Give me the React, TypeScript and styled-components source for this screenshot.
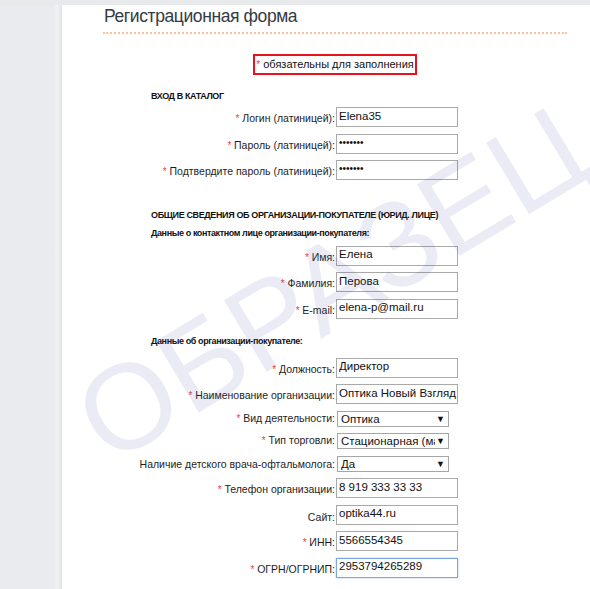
import styled, { createGlobalStyle, css } from "styled-components";

type Field = {
    label: string;
    required?: boolean;
    kind?: "text" | "password" | "select";
    value: string;
    focused?: boolean;
};

const loginFields: Field[] = [
    { label: "Логин (латиницей):", required: true, value: "Elena35" },
    { label: "Пароль (латиницей):", required: true, kind: "password", value: "1234567" },
    { label: "Подтвердите пароль (латиницей):", required: true, kind: "password", value: "1234567" },
];

const contactFields: Field[] = [
    { label: "Имя:", required: true, value: "Елена" },
    { label: "Фамилия:", required: true, value: "Перова" },
    { label: "E-mail:", required: true, value: "elena-p@mail.ru" },
];

const orgFields: Field[] = [
    { label: "Должность:", required: true, value: "Директор" },
    { label: "Наименование организации:", required: true, value: "Оптика Новый Взгляд" },
    { label: "Вид деятельности:", required: true, kind: "select", value: "Оптика" },
    { label: "Тип торговли:", required: true, kind: "select", value: "Стационарная (магазин)" },
    { label: "Наличие детского врача-офтальмолога:", kind: "select", value: "Да" },
    { label: "Телефон организации:", required: true, value: "8 919 333 33 33" },
    { label: "Сайт:", value: "optika44.ru" },
    { label: "ИНН:", required: true, value: "5566554345" },
    { label: "ОГРН/ОГРНИП:", required: true, value: "2953794265289", focused: true },
];

const GlobalStyle = createGlobalStyle`
    html, body {
        margin: 0;
        padding: 0;
        background: #fff;
    }
    body {
        font-family: "Liberation Sans", Arial, sans-serif;
        color: #1e1e1e;
    }
`;

const Page = styled.div`
    position: relative;
    display: flex;
    height: 589px;
    box-sizing: border-box;
    border-top: 5px solid #e8e9ea;
    overflow: hidden;
`;

const Sidebar = styled.aside`
    width: 62px;
    flex-shrink: 0;
    background: linear-gradient(
        to right,
        #e9ebee 0,
        #e9ebee 54px,
        #f2f3f5 57px,
        #e5e7ea 61px,
        #dcdee1 62px
    );
`;

const Main = styled.main`
    flex: 1;
    padding-left: 41px;
`;

const Content = styled.div`
    width: 464px;
`;

const Title = styled.h1`
    margin: 0;
    padding: 0 0 5px 1px;
    font-size: 17.5px;
    line-height: 22px;
    font-weight: normal;
    letter-spacing: -0.4px;
    color: #333a44;
    border-bottom: 2px dotted #fbc29a;
`;

const Notice = styled.div`
    width: fit-content;
    margin: 20px auto 0;
    padding: 0 1px;
    border: 2px solid #e8121c;
    font-size: 11px;
    line-height: 16px;
    color: #111;
`;

const Star = styled.span`
    color: #f03a46;
    font-size: 10px;
`;

const SectionTitle = styled.div<{ $spacing: number; $top: number }>`
    margin-top: ${props => props.$top}px;
    padding-left: 48px;
    font-size: 9px;
    line-height: 11px;
    font-weight: bold;
    letter-spacing: ${props => props.$spacing}px;
    color: #111;
`;

const Fields = styled.div<{ $top: number }>`
    display: grid;
    grid-template-columns: 232px auto;
    column-gap: 1px;
    row-gap: 6.5px;
    align-items: end;
    justify-items: start;
    margin-top: ${props => props.$top}px;
`;

const Label = styled.label`
    justify-self: end;
    font-size: 10.5px;
    line-height: 14px;
    padding-bottom: 1px;
    white-space: nowrap;
    color: #1e1e1e;
`;

const TextInput = styled.input<{ $focused?: boolean; $secret?: boolean }>`
    box-sizing: border-box;
    width: 122px;
    height: 20px;
    margin: 0;
    padding: 0 0 3px 2px;
    border: 1px solid #a9a9a9;
    background: #fff;
    font-family: inherit;
    font-size: ${props => (props.$secret ? "10px" : "11.5px")};
    color: #111;
    outline: none;

    ${props =>
        props.$focused &&
        css`
            border-color: #7ba6e4;
            box-shadow: 0 0 2px #a8c6f0;
        `}
`;

const SelectBox = styled.div`
    box-sizing: border-box;
    width: 112px;
    height: 16px;
    margin-left: 1px;
    display: flex;
    align-items: center;
    padding: 0 3px 0 3px;
    border: 1px solid #a6a6a6;
    background: #fff;
    font-size: 11.5px;
    color: #111;

    span {
        flex: 1;
        overflow: hidden;
        white-space: nowrap;
        line-height: 14px;
    }

    i {
        font-style: normal;
        font-size: 9px;
        margin-left: 1px;
    }
`;

const Watermark = styled.div`
    position: absolute;
    left: 332px;
    top: 279px;
    transform: translate(-50%, -50%) rotate(-31deg);
    font-size: 121px;
    line-height: 1;
    white-space: nowrap;
    color: rgba(70, 70, 170, 0.11);
    pointer-events: none;
`;

function FieldList({ fields, top }: { fields: Field[]; top: number }) {
    return (
        <Fields $top={top}>
            {fields.map(field => (
                <FieldRow key={field.label} field={field} />
            ))}
        </Fields>
    );
}

function FieldRow({ field }: { field: Field }) {
    return (
        <>
            <Label>
                {field.required && <Star>* </Star>}
                {field.label}
            </Label>
            {field.kind === "select" ? (
                <SelectBox>
                    <span>{field.value}</span>
                    <i>▼</i>
                </SelectBox>
            ) : (
                <TextInput
                    type={field.kind === "password" ? "password" : "text"}
                    defaultValue={field.value}
                    $secret={field.kind === "password"}
                    $focused={field.focused}
                />
            )}
        </>
    );
}

export default function App() {
    return (
        <>
            <GlobalStyle />
            <Page>
                <Sidebar />
                <Main>
                    <Content>
                        <Title>Регистрационная форма</Title>
                        <Notice>
                            <Star>*</Star> обязательны для заполнения
                        </Notice>

                        <SectionTitle $spacing={-0.4} $top={16}>
                            ВХОД В КАТАЛОГ
                        </SectionTitle>
                        <FieldList fields={loginFields} top={5} />

                        <SectionTitle $spacing={-0.37} $top={30}>
                            ОБЩИЕ СВЕДЕНИЯ ОБ ОРГАНИЗАЦИИ-ПОКУПАТЕЛЕ (ЮРИД. ЛИЦЕ)
                        </SectionTitle>
                        <SectionTitle $spacing={-0.4} $top={7}>
                            Данные о контактном лице организации-покупателя:
                        </SectionTitle>
                        <FieldList fields={contactFields} top={6.5} />

                        <SectionTitle $spacing={-0.4} $top={17.5}>
                            Данные об организации-покупателе:
                        </SectionTitle>
                        <FieldList fields={orgFields} top={10.5} />
                    </Content>
                </Main>
                <Watermark>ОБРАЗЕЦ</Watermark>
            </Page>
        </>
    );
}
